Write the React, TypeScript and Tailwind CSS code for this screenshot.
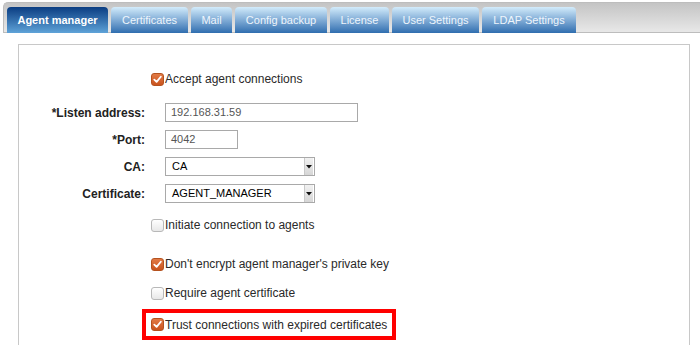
import React from 'react';

const tabs = [
  { label: 'Agent manager', w: 'w-[101px]', active: true },
  { label: 'Certificates', w: 'w-[77px]' },
  { label: 'Mail', w: 'w-[41px]' },
  { label: 'Config backup', w: 'w-[92px]' },
  { label: 'License', w: 'w-[59px]' },
  { label: 'User Settings', w: 'w-[87px]' },
  { label: 'LDAP Settings', w: 'w-[94px]' },
];

function Checkbox({ checked }: { checked?: boolean }) {
  if (!checked) {
    return (
      <span className="inline-block w-[13px] h-[13px] rounded-[3px] border border-[#b8b8b8] bg-gradient-to-b from-white to-[#e8e8e8] shrink-0" />
    );
  }
  return (
    <span className="inline-flex items-center justify-center w-[13px] h-[13px] rounded-[3px] border border-[#b5521f] bg-gradient-to-b from-[#e27a45] to-[#c9541e] shrink-0">
      <svg width="9" height="9" viewBox="0 0 9 9">
        <path d="M1.3 4.6 L3.6 6.9 L7.8 1.8" fill="none" stroke="#fff" strokeWidth="1.8" strokeLinecap="round" strokeLinejoin="round" />
      </svg>
    </span>
  );
}

function CheckRow({ label, checked, className }: { label: string; checked?: boolean; className?: string }) {
  return (
    <div className={`flex items-center h-[18px] pl-[132px] ${className ?? ''}`}>
      <Checkbox checked={checked} />
      <span className="ml-[1px] text-[12px] text-[#2a2a2a]">{label}</span>
    </div>
  );
}

function FieldRow({ label, className, children }: { label: string; className?: string; children: React.ReactNode }) {
  return (
    <div className={`flex items-center h-[19px] ${className ?? ''}`}>
      <div className="w-[126px] text-right text-[12px] font-bold text-[#222]">{label}</div>
      <div className="ml-[20px] flex">{children}</div>
    </div>
  );
}

function Select({ value }: { value: string }) {
  return (
    <div className="flex items-center w-[150px] h-[19px] border border-[#a9a9a9] bg-white">
      <span className="flex-1 pl-[6px] text-[11px] text-black">{value}</span>
      <span className="flex items-center justify-center w-[9px] h-[17px] mr-[1px] border-l border-[#c9c9c9] bg-gradient-to-b from-[#f2f2f2] to-[#d6d6d6]">
        <svg width="6" height="5" viewBox="0 0 6 5">
          <path d="M0 1 L6 1 L3 4.5 Z" fill="#111" />
        </svg>
      </span>
    </div>
  );
}

export default function App() {
  return (
    <div className="w-[700px] h-[345px] overflow-hidden bg-white font-['Liberation_Sans',Arial,sans-serif]">
      <div className="pt-[2px] pl-[3px]">
        <div className="flex gap-[3px] h-[31px] pt-[4px] pl-[3px] rounded-tl-[5px] border-l border-t border-b border-[#bdbdbd] bg-gradient-to-b from-[#c4c4c4] to-[#e8e8e8]">
          {tabs.map((t) =>
            t.active ? (
              <div
                key={t.label}
                className={`${t.w} h-[26px] flex items-center justify-center rounded-t-[4px] bg-gradient-to-b from-[#0a3d82] to-[#5fa3d8] text-white text-[11px] font-bold`}
              >
                {t.label}
              </div>
            ) : (
              <div
                key={t.label}
                className={`${t.w} h-[26px] flex items-center justify-center rounded-t-[4px] bg-gradient-to-b from-[#d3ecfb] to-[#2f6eaf] text-[#eef5fc] text-[11px]`}
              >
                {t.label}
              </div>
            )
          )}
        </div>
      </div>

      <div className="ml-[18px] mt-[11px] w-[672px] h-[400px] border border-[#c8c8c8]">
        <CheckRow label="Accept agent connections" checked className="mt-[25px]" />

        <FieldRow label="*Listen address:" className="mt-[15px]">
          <div className="w-[193px] h-[19px] border border-[#a9a9a9] flex items-center pl-[5px] text-[11px] text-[#555]">
            192.168.31.59
          </div>
        </FieldRow>
        <FieldRow label="*Port:" className="mt-[8px]">
          <div className="w-[73px] h-[19px] border border-[#a9a9a9] flex items-center pl-[5px] text-[11px] text-[#555]">
            4042
          </div>
        </FieldRow>
        <FieldRow label="CA:" className="mt-[8px]">
          <Select value="CA" />
        </FieldRow>
        <FieldRow label="Certificate:" className="mt-[8px]">
          <Select value="AGENT_MANAGER" />
        </FieldRow>

        <CheckRow label="Initiate connection to agents" className="mt-[13px]" />
        <CheckRow label="Don't encrypt agent manager's private key" checked className="mt-[21px]" />
        <CheckRow label="Require agent certificate" className="mt-[11px]" />

        <div className="mt-[7px] ml-[123px] w-[254px] h-[31px] border-[4px] border-[#ff0000] flex items-center pl-[5px]">
          <Checkbox checked />
          <span className="ml-[1px] text-[12px] text-[#2a2a2a]">Trust connections with expired certificates</span>
        </div>
      </div>
    </div>
  );
}
